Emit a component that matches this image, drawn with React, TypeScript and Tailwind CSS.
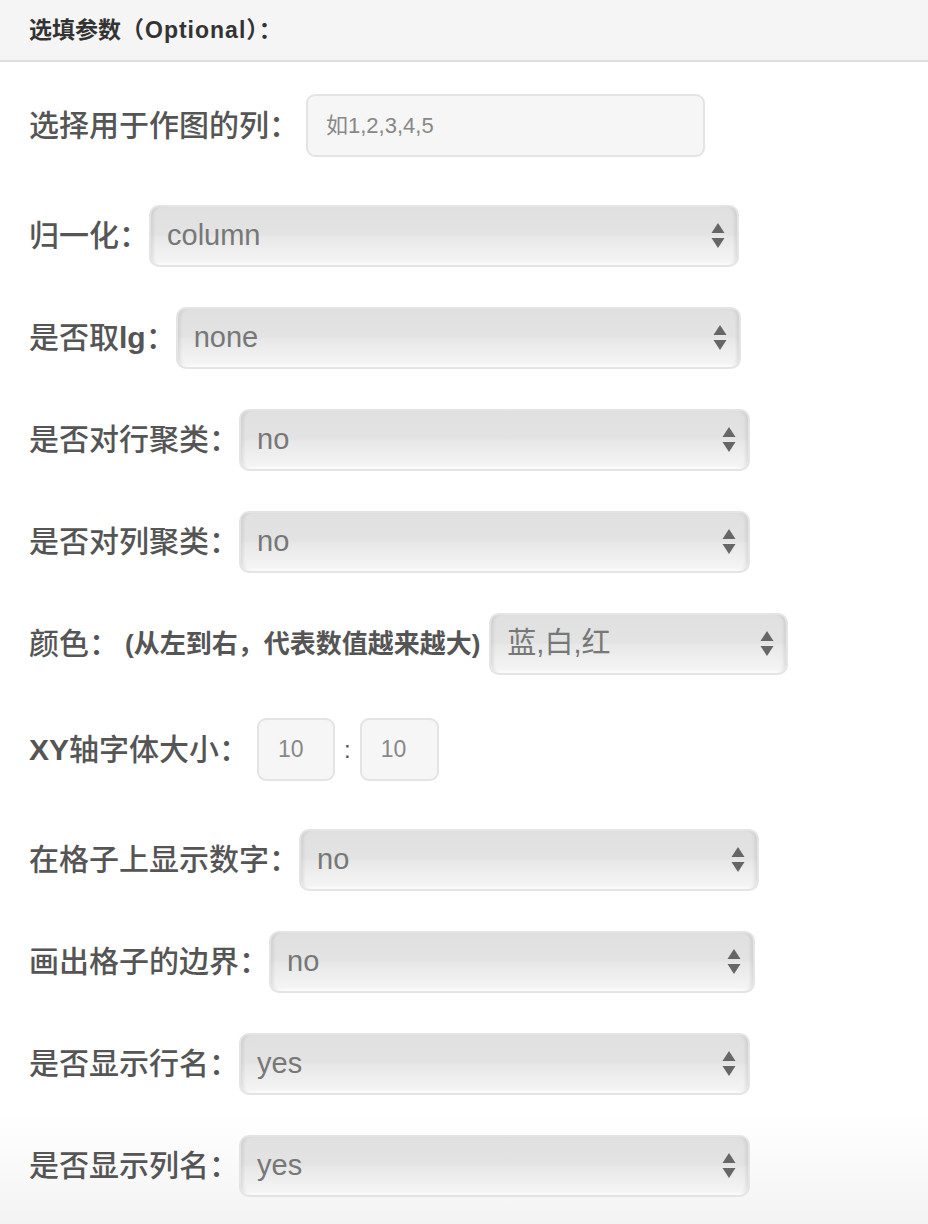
import React from "react";

const FONT = "font-['Liberation_Sans','Noto_Sans_CJK_SC',sans-serif]";

const Arrows: React.FC = () => (
    <svg width="14" height="26" viewBox="0 0 14 26" className="shrink-0">
        <polygon points="7,0 13.5,10 0.5,10" fill="#666" />
        <polygon points="0.5,15 13.5,15 7,25" fill="#666" />
    </svg>
);

const FakeSelect: React.FC<{ value: string; width: number; className?: string }> = ({ value, width, className }) => (
    <div
        style={{ width }}
        className={`flex h-[62px] shrink-0 items-center justify-between rounded-[10px] border-2 border-[#e4e4e4] bg-[linear-gradient(to_bottom,#e0e0e0,#e3e3e3_48%,#e8e8e8_52%,#f6f6f6)] pl-[16px] pr-[12px] text-[29px] text-[#777] shadow-[inset_4px_0_4px_-3px_rgba(0,0,0,0.14),inset_-4px_0_4px_-3px_rgba(0,0,0,0.14),inset_0_-2px_2px_rgba(255,255,255,0.7)] ${className ?? ""}`}
    >
        <span>{value}</span>
        <Arrows />
    </div>
);

type Row = { label: React.ReactNode; value: string; width: number; mt: string };

const rows: Row[] = [
    { label: "归一化：", value: "column", width: 590, mt: "mt-[48px]" },
    { label: <>是否取<span className="font-bold">lg</span>：</>, value: "none", width: 565, mt: "mt-[40px]" },
    { label: "是否对行聚类：", value: "no", width: 511, mt: "mt-[40px]" },
    { label: "是否对列聚类：", value: "no", width: 511, mt: "mt-[40px]" },
];

const rowsAfter: Row[] = [
    { label: "在格子上显示数字：", value: "no", width: 460, mt: "mt-[48px]" },
    { label: "画出格子的边界：", value: "no", width: 486, mt: "mt-[40px]" },
    { label: "是否显示行名：", value: "yes", width: 511, mt: "mt-[40px]" },
    { label: "是否显示列名：", value: "yes", width: 511, mt: "mt-[40px]" },
];

const labelCls = "shrink-0 text-[30px] font-medium leading-none text-[#555]";

const SelectRow: React.FC<{ row: Row }> = ({ row }) => (
    <div className={`flex items-center ${row.mt}`}>
        <span className={labelCls}>{row.label}</span>
        <FakeSelect value={row.value} width={row.width} />
    </div>
);

export default function App() {
    return (
        <div className={`min-h-[1224px] w-full bg-[linear-gradient(to_bottom,#ffffff_91%,#f3f3f3)] ${FONT}`}>
            {/* 标题栏 */}
            <div className="flex h-[62px] items-center border-b-2 border-[#dedede] bg-[#f5f5f5] px-[29px]">
                <span className="text-[23px] font-bold text-[#333]">
                    选填参数<span className="tracking-[1px]">（Optional）</span>：
                </span>
            </div>

            <div className="px-[29px] pb-[27px]">
                {/* 作图列 */}
                <div className="mt-[32px] flex items-center">
                    <span className={labelCls}>选择用于作图的列：</span>
                    <input
                        placeholder="如1,2,3,4,5"
                        className="ml-[7px] h-[63px] w-[399px] rounded-[9px] border-2 border-[#e4e4e4] bg-[#f6f6f6] px-[18px] text-[22px] text-[#888] outline-none placeholder:text-[#888]"
                    />
                </div>

                {rows.map((r, i) => (
                    <SelectRow key={i} row={r} />
                ))}

                {/* 颜色 */}
                <div className="mt-[40px] flex items-center">
                    <span className={labelCls}>颜色：</span>
                    <span className="ml-[6px] text-[26px] font-bold text-[#555]">(从左到右，代表数值越来越大)</span>
                    <FakeSelect value="蓝,白,红" width={299} className="ml-[9px]" />
                </div>

                {/* 字体大小 */}
                <div className="mt-[43px] flex items-center">
                    <span className={labelCls}>
                        <span className="font-bold">XY</span>轴字体大小：
                    </span>
                    <input
                        defaultValue="10"
                        className="ml-[8px] h-[63px] w-[78px] rounded-[9px] border-2 border-[#e4e4e4] bg-[#f6f6f6] px-[19px] text-[23px] text-[#888] outline-none"
                    />
                    <span className="mx-[9px] text-[24px] font-medium text-[#555]">:</span>
                    <input
                        defaultValue="10"
                        className="h-[63px] w-[79px] rounded-[9px] border-2 border-[#e4e4e4] bg-[#f6f6f6] px-[19px] text-[23px] text-[#888] outline-none"
                    />
                </div>

                {rowsAfter.map((r, i) => (
                    <SelectRow key={i} row={r} />
                ))}
            </div>
        </div>
    );
}
